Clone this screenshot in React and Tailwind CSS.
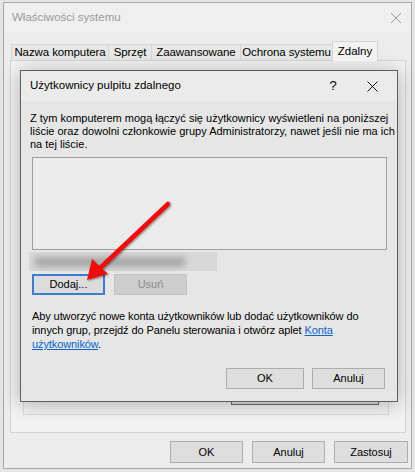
import React from 'react';

const font = { fontFamily: '"Liberation Sans", Arial, sans-serif' };

const Btn = ({ children, className = '' }) => (
  <div className={`flex items-center justify-center h-[21px] w-[73px] border border-[#adadad] bg-[#dedede] text-[11px] text-black ${className}`}>
    {children}
  </div>
);

const Tab = ({ label, w, active }) =>
  active ? (
    <div className={`${w} h-[20px] -mb-px border border-b-0 border-[#d4d4d4] bg-[#f3f3f3] flex items-start justify-center pt-[1px] text-[11.5px] whitespace-nowrap relative z-10`}>
      {label}
    </div>
  ) : (
    <div className={`${w} h-[16px] border border-r-0 border-b-0 border-[#d4d4d4] bg-[#e8e8e8] flex items-center justify-center text-[11.5px] tracking-[-0.1px] whitespace-nowrap`}>
      {label}
    </div>
  );

const App = () => {
  return (
    <div className="relative w-[415px] h-[472px] overflow-hidden bg-[#e4e4e4] pl-[3px] pt-[2px]" style={font}>
      {/* główne okno */}
      <div className="w-[409px] h-[467px] border border-[#a8a8a8] bg-[#ececec] flex flex-col">
        <div className="h-[29px] flex items-center justify-between pl-[8px] pr-[8px] bg-[#efefef]">
          <span className="text-[11.5px] text-[#9a9a9a]">Właściwości systemu</span>
          <svg width="12" height="12" viewBox="0 0 12 12" className="mr-[1px]">
            <path d="M1 1 L11 11 M11 1 L1 11" stroke="#9a9a9a" strokeWidth="1" />
          </svg>
        </div>

        {/* zakładki */}
        <div className="flex items-end pl-[7px] mt-[8px] h-[20px]">
          <Tab label="Nazwa komputera" w="w-[97px]" />
          <Tab label="Sprzęt" w="w-[43px]" />
          <Tab label="Zaawansowane" w="w-[89px]" />
          <Tab label="Ochrona systemu" w="w-[92px]" />
          <Tab label="Zdalny" w="w-[46px]" active />
        </div>
        <div className="ml-[6px] w-[396px] h-[373px] border border-[#d4d4d4] bg-[#f2f2f2] flex flex-col pl-[12px] pr-[16px] pb-[17px] pt-[150px]">
          <div className="flex-1 border border-[#dadada] flex items-end justify-end pr-[9px] pb-[9px]">
            <div className="w-[148px] h-[23px] border border-[#6b6b6b] bg-[#dedede]" />
          </div>
        </div>

        {/* przyciski dolne */}
        <div className="flex justify-end gap-[9px] pr-[3px] mt-[8px]">
          <Btn className="w-[73px] h-[22px]">OK</Btn>
          <Btn className="w-[73px] h-[22px]">Anuluj</Btn>
          <Btn className="w-[74px] h-[22px]">Zastosuj</Btn>
        </div>
      </div>

      {/* okno modalne */}
      <div className="absolute left-[20px] top-[70px] w-[378px] h-[332px] border border-[#5f5f5f] bg-[#e6e6e6] shadow-[0_2px_18px_rgba(0,0,0,0.28)] flex flex-col">
        <div className="h-[30px] flex items-center bg-[#ebebeb] pl-[9px]">
          <span className="text-[11.5px] text-black flex-1">Użytkownicy pulpitu zdalnego</span>
          <span className="text-[13px] text-black w-[20px] text-center mr-[24px]">?</span>
          <svg width="11" height="11" viewBox="0 0 11 11" className="mr-[19px]">
            <path d="M0.5 0.5 L10.5 10.5 M10.5 0.5 L0.5 10.5" stroke="#111" strokeWidth="1" />
          </svg>
        </div>
        <div className="flex-1 flex flex-col pl-[9px] pt-[11px]">
          <p className="text-[11px] leading-[13px] text-black whitespace-nowrap">
            Z tym komputerem mogą łączyć się użytkownicy wyświetleni na poniższej<br />
            liście oraz dowolni członkowie grupy Administratorzy, nawet jeśli nie ma ich<br />
            na tej liście.
          </p>
          <div className="ml-[2px] mt-[6px] w-[355px] h-[93px] border border-[#9e9e9e] bg-[#ebebeb]" />
          <div className="mt-[2px] -ml-[1px] w-[188px] h-[19px] bg-[#d8d8d8] flex items-center overflow-hidden">
            <div className="ml-[6px] w-[150px] h-[10px] bg-[#a8a8a8] blur-[3px]" />
          </div>
          <div className="flex gap-[9px] ml-[2px] mt-[3px]">
            <div className="flex items-center justify-center h-[21px] w-[73px] border-2 border-[#3d7dd0] bg-[#dcdcdc] text-[11px] text-black">
              Dodaj...
            </div>
            <div className="flex items-center justify-center h-[21px] w-[73px] border border-[#c2c2c2] bg-[#cdcdcd] text-[11px] text-[#8c8c8c]">
              Usuń
            </div>
          </div>
          <p className="ml-[2px] mt-[14px] text-[11px] leading-[14px] tracking-[-0.1px] text-black whitespace-nowrap">
            Aby utworzyć nowe konta użytkowników lub dodać użytkowników do<br />
            innych grup, przejdź do Panelu sterowania i otwórz aplet <span className="text-[#0a64c8] underline">Konta</span><br />
            <span className="text-[#0a64c8] underline">użytkowników</span>.
          </p>
          <div className="flex justify-end gap-[8px] pr-[12px] mt-[17px]">
            <Btn className="w-[78px]">OK</Btn>
            <Btn className="w-[73px]">Anuluj</Btn>
          </div>
        </div>
      </div>

      {/* czerwona strzałka */}
      <svg className="absolute left-0 top-0" width="415" height="472" viewBox="0 0 415 472">
        <defs>
          <filter id="sh" x="-20%" y="-20%" width="140%" height="140%">
            <feDropShadow dx="1" dy="1" stdDeviation="1.2" floodColor="#000" floodOpacity="0.45" />
          </filter>
        </defs>
        <g filter="url(#sh)">
          <line x1="168" y1="204" x2="98" y2="270" stroke="#ee1111" strokeWidth="4.5" strokeLinecap="round" />
          <polygon points="87,280 92,259 108,274" fill="#ee1111" />
        </g>
      </svg>
    </div>
  );
};

export default App;
